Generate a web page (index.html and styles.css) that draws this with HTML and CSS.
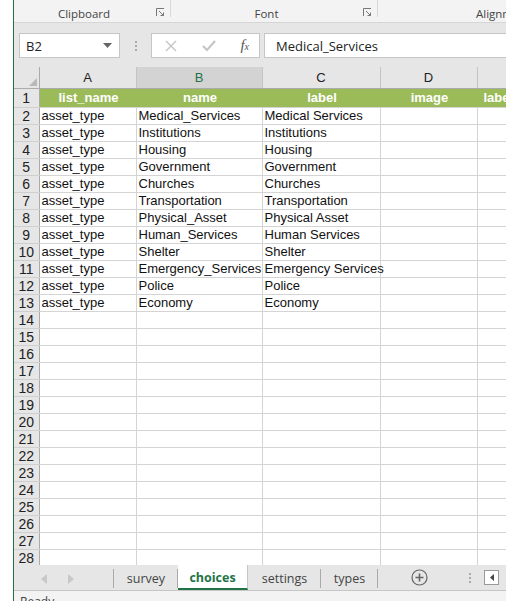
FILE: index.html
```html
<!DOCTYPE html>
<html lang="en">
<head>
  <meta charset="UTF-8" />
  <title>choices - Excel</title>
  <link rel="stylesheet" href="styles.css">
</head>
<body>
<div class="app">

  <!-- ribbon group captions -->
  <div class="ribbon">
    <div class="group clipboard">
      <span>Clipboard</span>
      <svg class="launcher" width="9" height="9" viewBox="0 0 9 9"><path d="M0.5 8V0.5H8" fill="none" stroke="#777"/><path d="M3 3L7.5 7.5M4.5 7.5H7.5V4.5" fill="none" stroke="#777"/></svg>
    </div>
    <div class="group font">
      <span>Font</span>
      <svg class="launcher" width="9" height="9" viewBox="0 0 9 9"><path d="M0.5 8V0.5H8" fill="none" stroke="#777"/><path d="M3 3L7.5 7.5M4.5 7.5H7.5V4.5" fill="none" stroke="#777"/></svg>
    </div>
    <div class="group align"><span>Alignment</span></div>
  </div>

  <!-- name box + formula bar -->
  <div class="formula-row">
    <div class="namebox">
      <span>B2</span>
      <svg width="9" height="5" viewBox="0 0 9 5"><path d="M0 0H9L4.5 5Z" fill="#666"/></svg>
    </div>
    <div class="grip"><i></i><i></i><i></i></div>
    <div class="fbuttons">
      <svg width="12" height="12" viewBox="0 0 12 12"><path d="M1 1L11 11M11 1L1 11" stroke="#c4c4c4" stroke-width="1.4"/></svg>
      <svg width="14" height="12" viewBox="0 0 14 12"><path d="M1 6L5 10L13 1" fill="none" stroke="#c4c4c4" stroke-width="2"/></svg>
      <span class="fx">f<small>x</small></span>
    </div>
    <div class="fbox">Medical_Services</div>
  </div>

  <!-- worksheet grid -->
  <div class="sheet">
    <table class="grid">
      <colgroup>
        <col class="c-num"><col class="c-a"><col class="c-b"><col class="c-c"><col class="c-d"><col class="c-e">
      </colgroup>
      <thead>
        <tr>
          <th class="corner"><svg width="8" height="8" viewBox="0 0 8 8"><path d="M8 0V8H0Z" fill="#b9b9b9"/></svg></th>
          <th>A</th><th class="sel">B</th><th>C</th><th>D</th><th>E</th>
        </tr>
      </thead>
      <tbody>
        <tr class="head"><td class="num">1</td><td>list_name</td><td>name</td><td>label</td><td>image</td><td class="cut">label</td></tr>
        <tr><td class="num">2</td><td>asset_type</td><td>Medical_Services</td><td>Medical Services</td><td></td><td></td></tr>
        <tr><td class="num">3</td><td>asset_type</td><td>Institutions</td><td>Institutions</td><td></td><td></td></tr>
        <tr><td class="num">4</td><td>asset_type</td><td>Housing</td><td>Housing</td><td></td><td></td></tr>
        <tr><td class="num">5</td><td>asset_type</td><td>Government</td><td>Government</td><td></td><td></td></tr>
        <tr><td class="num">6</td><td>asset_type</td><td>Churches</td><td>Churches</td><td></td><td></td></tr>
        <tr><td class="num">7</td><td>asset_type</td><td>Transportation</td><td>Transportation</td><td></td><td></td></tr>
        <tr><td class="num">8</td><td>asset_type</td><td>Physical_Asset</td><td>Physical Asset</td><td></td><td></td></tr>
        <tr><td class="num">9</td><td>asset_type</td><td>Human_Services</td><td>Human Services</td><td></td><td></td></tr>
        <tr><td class="num">10</td><td>asset_type</td><td>Shelter</td><td>Shelter</td><td></td><td></td></tr>
        <tr><td class="num">11</td><td>asset_type</td><td>Emergency_Services</td><td>Emergency Services</td><td></td><td></td></tr>
        <tr><td class="num">12</td><td>asset_type</td><td>Police</td><td>Police</td><td></td><td></td></tr>
        <tr><td class="num">13</td><td>asset_type</td><td>Economy</td><td>Economy</td><td></td><td></td></tr>
        <tr><td class="num">14</td><td></td><td></td><td></td><td></td><td></td></tr>
        <tr><td class="num">15</td><td></td><td></td><td></td><td></td><td></td></tr>
        <tr><td class="num">16</td><td></td><td></td><td></td><td></td><td></td></tr>
        <tr><td class="num">17</td><td></td><td></td><td></td><td></td><td></td></tr>
        <tr><td class="num">18</td><td></td><td></td><td></td><td></td><td></td></tr>
        <tr><td class="num">19</td><td></td><td></td><td></td><td></td><td></td></tr>
        <tr><td class="num">20</td><td></td><td></td><td></td><td></td><td></td></tr>
        <tr><td class="num">21</td><td></td><td></td><td></td><td></td><td></td></tr>
        <tr><td class="num">22</td><td></td><td></td><td></td><td></td><td></td></tr>
        <tr><td class="num">23</td><td></td><td></td><td></td><td></td><td></td></tr>
        <tr><td class="num">24</td><td></td><td></td><td></td><td></td><td></td></tr>
        <tr><td class="num">25</td><td></td><td></td><td></td><td></td><td></td></tr>
        <tr><td class="num">26</td><td></td><td></td><td></td><td></td><td></td></tr>
        <tr><td class="num">27</td><td></td><td></td><td></td><td></td><td></td></tr>
        <tr><td class="num">28</td><td></td><td></td><td></td><td></td><td></td></tr>
      </tbody>
    </table>
  </div>

  <!-- sheet tabs -->
  <div class="tabs">
    <div class="nav">
      <svg width="6" height="10" viewBox="0 0 6 10"><path d="M6 0V10L0 5Z" fill="#c8c8c8"/></svg>
      <svg width="6" height="10" viewBox="0 0 6 10"><path d="M0 0V10L6 5Z" fill="#c8c8c8"/></svg>
    </div>
    <div class="tab t-survey">survey</div>
    <div class="tab active">choices</div>
    <div class="tab t-settings">settings</div>
    <div class="tab t-types">types</div>
    <div class="add">
      <svg width="17" height="17" viewBox="0 0 17 17"><circle cx="8.5" cy="8.5" r="7.5" fill="none" stroke="#666" stroke-width="1.2"/><path d="M8.5 4.5V12.5M4.5 8.5H12.5" stroke="#666" stroke-width="1.6"/></svg>
    </div>
    <div class="grip tabgrip"><i></i><i></i><i></i></div>
    <div class="hscroll">
      <span class="sbtn"><svg width="4" height="7" viewBox="0 0 4 7"><path d="M4 0V7L0 3.5Z" fill="#444"/></svg></span>
    </div>
  </div>

  <div class="status">Ready</div>
</div>
</body>
</html>
```

FILE: styles.css
```css
body {
  margin: 0;
  width: 506px;
  height: 601px;
  overflow: hidden;
  background: #fff;
  font-family: "Open Sans", "Noto Sans", sans-serif;
}
.app {
  margin-left: 13px;
  border-left: 1px solid #217346;
  height: 601px;
  display: flex;
  flex-direction: column;
  overflow: hidden;
}

/* ribbon captions */
.ribbon {
  height: 22px;
  background: #f3f3f3;
  border-bottom: 1px solid #d6d6d6;
  display: flex;
  flex-shrink: 0;
  overflow: hidden;
}
.group {
  position: relative;
  display: flex;
  justify-content: center;
  align-items: center;
  font-size: 11.5px;
  color: #444;
  box-sizing: border-box;
  flex-shrink: 0;
  white-space: nowrap;
}
.group.clipboard {
  width: 157px;
  border-right: 1px solid #d8d8d8;
  margin-bottom: 5px;
  padding: 10px 16px 0 0;
}
.group.font {
  width: 207px;
  border-right: 1px solid #d8d8d8;
  margin-bottom: 5px;
  padding: 10px 15px 0 0;
}
.group.align {
  flex: 1;
  justify-content: flex-start;
  padding: 5px 0 0 98px;
}
.launcher {
  position: absolute;
  right: 5px;
  bottom: 0px;
}

/* formula bar */
.formula-row {
  height: 44px;
  background: #e6e6e6;
  display: flex;
  align-items: flex-start;
  padding-top: 10px;
  box-sizing: border-box;
  flex-shrink: 0;
}
.namebox, .fbuttons, .fbox {
  height: 25px;
  box-sizing: border-box;
  background: #fff;
  border: 1px solid #c6c6c6;
  display: flex;
  align-items: center;
}
.namebox {
  margin-left: 5px;
  width: 101px;
  padding: 0 7px 0 6px;
  justify-content: space-between;
  font-size: 13px;
  color: #222;
}
.grip {
  width: 31px;
  height: 25px;
  display: flex;
  flex-direction: column;
  align-items: center;
  justify-content: center;
  gap: 2px;
}
.grip i {
  width: 2px;
  height: 2px;
  background: #aaa;
}
.fbuttons {
  width: 109px;
  padding: 0 10px 0 13px;
  justify-content: space-between;
}
.fx {
  font-family: "Liberation Serif", serif;
  font-style: italic;
  font-size: 15px;
  color: #555;
}
.fx small {
  font-size: 10px;
}
.fbox {
  margin-left: 4px;
  flex: 1;
  padding-left: 11px;
  font-size: 13px;
  color: #222;
  border-right: none;
}

/* grid */
.sheet {
  flex: 1;
  overflow: hidden;
  background: #fff;
}
.grid {
  border-collapse: collapse;
  table-layout: fixed;
  width: 600px;
  font-family: "Liberation Sans", Arial, sans-serif;
  font-size: 13px;
}
.c-num { width: 25px; }
.c-a { width: 97px; }
.c-b { width: 126px; }
.c-c { width: 118px; }
.c-d { width: 97px; }
.c-e { width: 137px; }
.grid th {
  height: 19px;
  padding: 0;
  background: #e6e6e6;
  font-weight: normal;
  color: #222;
  border-right: 1px solid #c4c4c4;
  border-bottom: 1px solid #ababab;
  vertical-align: middle;
  line-height: 17px;
}
.grid th.sel {
  background: #d3d3d3;
  color: #217346;
}
.grid th.corner {
  text-align: right;
  vertical-align: bottom;
  line-height: 0;
  padding: 0 2px 2px 0;
  border-right-color: #ababab;
}
.grid td {
  height: 16px;
  padding: 0 0 0 2px;
  border-right: 1px solid #d4d4d4;
  border-bottom: 1px solid #d4d4d4;
  white-space: nowrap;
  overflow: visible;
  line-height: 16px;
  color: #111;
}
.grid td.num {
  background: #e6e6e6;
  color: #222;
  text-align: center;
  padding: 0;
  font-size: 14px;
  border-right: 1px solid #ababab;
  border-bottom: 1px solid #cfcfcf;
}
.grid tr.head td {
  height: 18px;
  background: #9bbb59;
  color: #fff;
  font-weight: bold;
  text-align: center;
  border-right-color: #9bbb59;
}
.grid tr.head td.num {
  background: #e6e6e6;
  color: #222;
  font-weight: normal;
  border-right-color: #ababab;
}
.grid tr.head td.cut {
  text-align: left;
  padding-left: 6px;
}

/* tabs */
.tabs {
  height: 26px;
  box-sizing: border-box;
  background: #e6e6e6;
  border-bottom: 1px solid #c6c6c6;
  display: flex;
  align-items: stretch;
  flex-shrink: 0;
  font-size: 12.5px;
  color: #444;
}
.nav {
  width: 100px;
  display: flex;
  align-items: center;
  gap: 21px;
  padding-left: 27px;
  box-sizing: border-box;
  border-right: 1px solid #aaa;
  margin: 4px 0 2px;
}
.tab {
  display: flex;
  align-items: center;
  justify-content: center;
  position: relative;
  box-sizing: border-box;
  flex-shrink: 0;
  padding-top: 2px;
}
.tab::after {
  content: "";
  position: absolute;
  right: 0;
  top: 4px;
  bottom: 2px;
  width: 1px;
  background: #aaa;
}
.t-survey { width: 64px; }
.t-settings { width: 73px; }
.t-types { width: 57px; }
.tab.active {
  background: #fff;
  color: #217346;
  font-weight: bold;
  width: 70px;
  border-right: 1px solid #c6c6c6;
  border-bottom: 2px solid #217346;
}
.tab.active::after {
  display: none;
}
.add {
  width: 83px;
  display: flex;
  align-items: center;
  justify-content: center;
}
.tabgrip {
  width: 18px;
  height: auto;
}
.hscroll {
  flex: 1;
  display: flex;
  align-items: center;
  padding-left: 5px;
}
.sbtn {
  width: 15px;
  height: 15px;
  box-sizing: border-box;
  background: #fff;
  border: 1px solid #9a9a9a;
  display: flex;
  align-items: center;
  justify-content: center;
}

.status {
  height: 10px;
  box-sizing: border-box;
  flex-shrink: 0;
  background: #f3f3f3;
  font-size: 12px;
  color: #444;
  padding: 4px 0 0 6px;
  line-height: 14px;
  overflow: hidden;
}
```
